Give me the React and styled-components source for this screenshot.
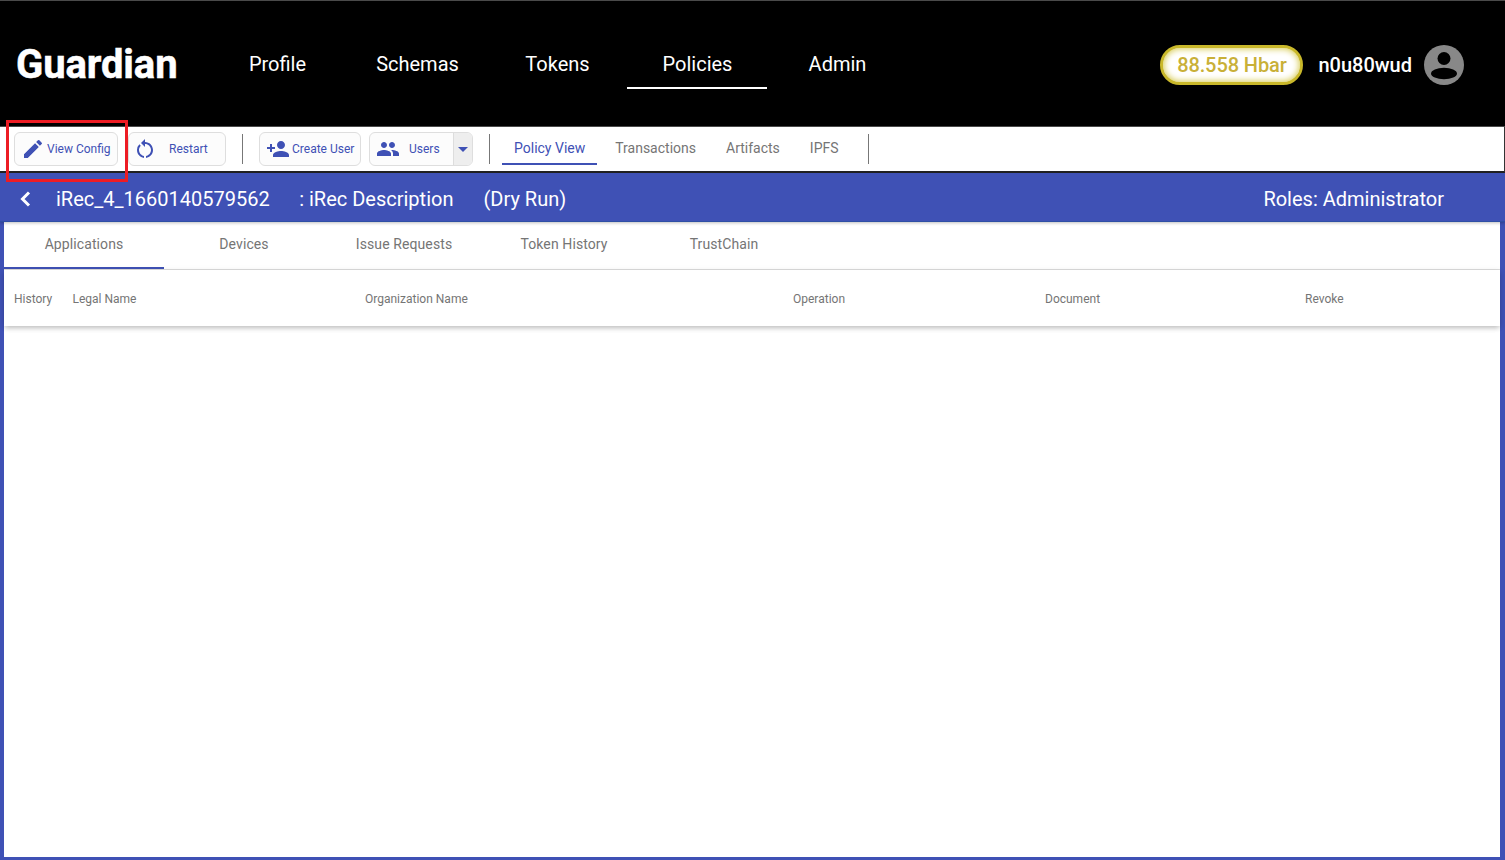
import React from 'react';
import styled, { createGlobalStyle } from 'styled-components';
import { MdEdit, MdPersonAdd, MdPeople, MdArrowDropDown, MdRestartAlt } from 'react-icons/md';

const Global = createGlobalStyle`
  html, body { margin: 0; padding: 0; height: 100%; background: #fff; }
  body { font-family: Roboto, "Liberation Sans", sans-serif; overflow: hidden; }
  * { box-sizing: border-box; }
`;

const Page = styled.div`
  position: relative; width: 1505px; height: 860px; display: flex; flex-direction: column; background: #fff;
`;
const Header = styled.header`
  height: 127px; background: #000; border-top: 1px solid #4a4a4a; border-bottom: 1px solid #4a4a4a;
  display: flex; align-items: flex-start; padding: 0 41px 0 16px;
`;
const Logo = styled.div`
  width: 191px; height: 88px; padding-top: 40px; line-height: 47px; color: #fff; font-size: 40px; font-weight: 700; letter-spacing: -0.1px;
  -webkit-text-stroke: 0.5px #fff;
`;
const Nav = styled.nav`display: flex; flex: 1;`;
const NavItem = styled.div`
  width: 140px; height: 88px; display: flex; align-items: center; justify-content: center; padding: 40px 0 0 1px;
  color: #fff; font-size: 20px; border-bottom: 2px solid ${p => (p.$active ? '#fff' : 'transparent')};
`;
const Account = styled.div`display: flex; align-items: center; height: 88px; padding-top: 39px;`;
const Balance = styled.div`
  width: 143px; height: 40px; border-radius: 20px; background: #fff; border: 3px solid #c9b82a; box-shadow: inset 0 0 6px 1px #d8cc55;
  display: flex; align-items: center; justify-content: center; color: #c9b037; font-size: 20px; font-weight: 500; letter-spacing: -0.1px; margin-right: 15px;
`;
const UserName = styled.div`color: #fff; font-size: 20px; font-weight: 500; margin-right: 12px;`;

const Toolbar = styled.div`
  height: 46px; background: #fff; border-right: 1px solid #333; border-bottom: 2px solid #222;
  display: flex; align-items: center; padding: 0 0 1px 14px;
`;
const ActionButton = styled.div`
  width: ${p => p.$w}px; height: 34px; margin-right: ${p => p.$mr || 0}px; border: 1px solid #dedede; border-radius: 6px; background: #fcfcfc;
  display: flex; align-items: center; color: #3f51b5; font-size: 12px; padding-left: ${p => p.$pl || 0}px; overflow: hidden;
  svg { flex: none; }
`;
const ButtonLabel = styled.span`margin-left: ${p => p.$ml}px; white-space: nowrap;`;
const DropSlot = styled.span`
  margin-left: auto; width: 19px; height: 100%; background: #eee; border-left: 1px solid #ddd;
  display: flex; align-items: center; justify-content: center;
`;
const Divider = styled.div`width: 1px; height: 30px; background: #777; margin: 0 ${p => p.$mr}px 0 ${p => p.$ml}px;`;
const ToolTab = styled.div`
  height: 33px; padding: 0 12px; margin-right: ${p => p.$mr}px; display: flex; align-items: center; font-size: 14px;
  color: ${p => (p.$active ? '#3f51b5' : '#757575')};
  border-bottom: 2px solid ${p => (p.$active ? '#3f51b5' : 'transparent')};
`;
const ToolLink = styled.div`font-size: 14px; color: #757575; margin-right: ${p => p.$mr}px; padding-bottom: 2px;`;

const Frame = styled.main`
  flex: 1; display: flex; flex-direction: column; border-left: 4px solid #3f51b5; border-right: 5px solid #3f51b5; border-bottom: 3px solid #3f51b5;
`;
const PolicyBar = styled.div`
  margin: 0 -5px 0 -4px; height: 49px; background: #3f51b5; border-bottom: 1px solid #2f4fa5; color: #fff; font-size: 20px;
  display: flex; align-items: center; padding: 3px 61px 0 16px; box-shadow: 0 1px 3px rgba(0,0,0,.25); position: relative;
  svg { flex: none; }
`;
const BarText = styled.span`margin-left: ${p => p.$ml}px;`;
const Roles = styled.span`margin-left: auto;`;
const Tabs = styled.div`display: flex; height: 48px; border-bottom: 1px solid #ddd;`;
const Tab = styled.div`
  width: 160px; height: 47px; display: flex; align-items: center; justify-content: center; padding-bottom: 2px;
  font-size: 14px; font-weight: 400; letter-spacing: .1px; color: #757575;
  border-bottom: 2px solid ${p => (p.$active ? '#3f51b5' : 'transparent')};
`;
const TableHead = styled.div`
  height: 56px; display: grid; grid-template-columns: 58px 293px 428px 252px 260px 1fr; align-items: center; padding: 2px 0 0 10px;
  font-size: 12px; font-weight: 400; color: #757575; background: #fff;
  box-shadow: 0 3px 5px -1px rgba(0,0,0,.2), 0 1px 6px 0 rgba(0,0,0,.1); position: relative;
`;
const LegalName = styled.span`padding-left: 0.5px;`;
const Body = styled.div`flex: 1; background: #fff;`;
const Highlight = styled.div`
  position: absolute; left: 6px; top: 120px; width: 122px; height: 62px; border: 3px solid #ed1c24; pointer-events: none;
`;

const Avatar = () => (
  <svg width="40" height="40" viewBox="0 0 40 40">
    <circle cx="20" cy="20" r="20" fill="#888" />
    <circle cx="20" cy="13.5" r="6.5" fill="#000" />
    <ellipse cx="20" cy="28.5" rx="13" ry="5.8" fill="#000" />
  </svg>
);

const BackChevron = () => (
  <svg width="20" height="20" viewBox="0 0 20 20">
    <path d="M13 3.5 L6.5 10 L13 16.5" fill="none" stroke="#fff" strokeWidth="3" />
  </svg>
);

export default function App() {
  return (
    <Page>
      <Global />
      <Header>
        <Logo>Guardian</Logo>
        <Nav>
          <NavItem>Profile</NavItem>
          <NavItem>Schemas</NavItem>
          <NavItem>Tokens</NavItem>
          <NavItem $active>Policies</NavItem>
          <NavItem>Admin</NavItem>
        </Nav>
        <Account>
          <Balance>88.558 Hbar</Balance>
          <UserName>n0u80wud</UserName>
          <Avatar />
        </Account>
      </Header>
      <Toolbar>
        <ActionButton $w={104} $mr={10} $pl={6}><MdEdit size={24} /><ButtonLabel $ml={2}>View Config</ButtonLabel></ActionButton>
        <ActionButton $w={98} $pl={4}><MdRestartAlt size={24} /><ButtonLabel $ml={12}>Restart</ButtonLabel></ActionButton>
        <Divider $ml={16} $mr={16} />
        <ActionButton $w={102} $mr={8} $pl={6}><MdPersonAdd size={24} /><ButtonLabel $ml={2}>Create User</ButtonLabel></ActionButton>
        <ActionButton $w={104} $pl={6}><MdPeople size={24} /><ButtonLabel $ml={9}>Users</ButtonLabel><DropSlot><MdArrowDropDown size={24} /></DropSlot></ActionButton>
        <Divider $ml={16} $mr={12} />
        <ToolTab $active $mr={18}>Policy View</ToolTab>
        <ToolLink $mr={30}>Transactions</ToolLink>
        <ToolLink $mr={30}>Artifacts</ToolLink>
        <ToolLink $mr={29}>IPFS</ToolLink>
        <Divider $ml={0} $mr={0} />
      </Toolbar>
      <Frame>
        <PolicyBar>
          <BackChevron />
          <BarText $ml={20}>iRec_4_1660140579562</BarText>
          <BarText $ml={29.5}>: iRec Description</BarText>
          <BarText $ml={30}>(Dry Run)</BarText>
          <Roles>Roles: Administrator</Roles>
        </PolicyBar>
        <Tabs>
          <Tab $active>Applications</Tab>
          <Tab>Devices</Tab>
          <Tab>Issue Requests</Tab>
          <Tab>Token History</Tab>
          <Tab>TrustChain</Tab>
        </Tabs>
        <TableHead>
          <span>History</span>
          <LegalName>Legal Name</LegalName>
          <span>Organization Name</span>
          <span>Operation</span>
          <span>Document</span>
          <span>Revoke</span>
        </TableHead>
        <Body />
      </Frame>
      <Highlight />
    </Page>
  );
}
